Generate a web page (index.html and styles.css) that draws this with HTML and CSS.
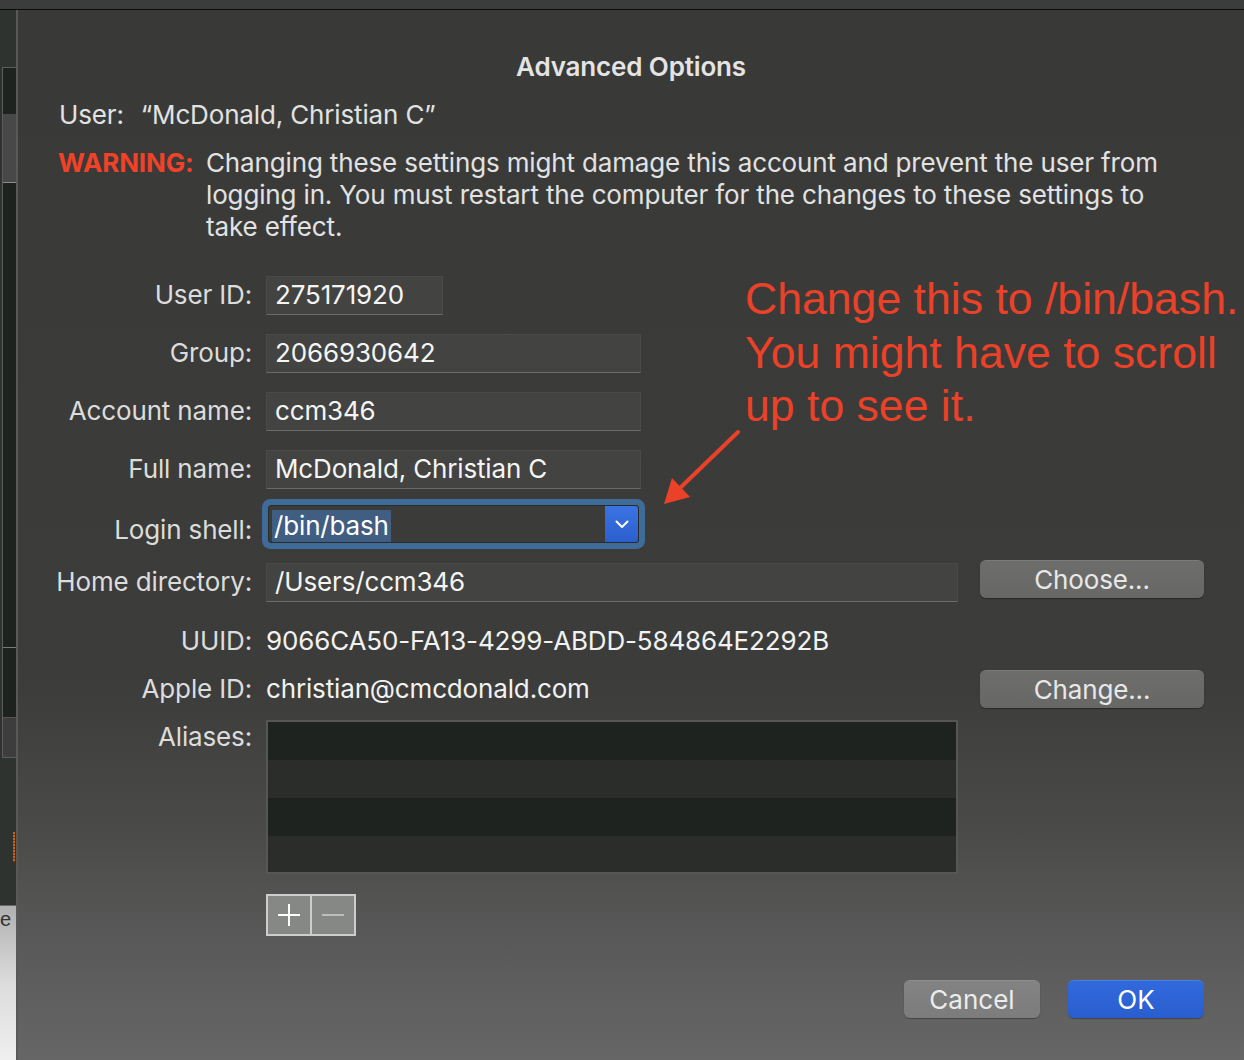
FILE: index.html
```html
<!DOCTYPE html>
<html lang="en">
<head>
<meta charset="utf-8">
<title>Advanced Options</title>
<link rel="stylesheet" href="styles.css">
</head>
<body>
<div class="topbar"></div>
<div class="main">
  <aside class="bgapp">
    <div class="bgbox">
      <div class="bb-a"></div>
      <div class="bb-b"></div>
      <div class="bb-c"></div>
      <div class="bb-d"></div>
      <div class="bb-e"></div>
    </div>
    <div class="orange"></div>
    <div class="bglight"><span class="bg-e">e</span></div>
  </aside>
  <section class="dialog">
    <h1 class="title">Advanced Options</h1>
    <div class="userline"><span class="ul-label">User:</span><span>“McDonald, Christian C”</span></div>
    <div class="warning">
      <span class="warn-label">WARNING:</span>
      <p class="warn-text">Changing these settings might damage this account and prevent the user from<br>logging in. You must restart the computer for the changes to these settings to<br>take effect.</p>
    </div>

    <div class="form">
      <div class="row r58">
        <label class="label">User ID:</label>
        <div class="fieldcol"><div class="field w-short">275171920</div></div>
      </div>
      <div class="row r58">
        <label class="label">Group:</label>
        <div class="fieldcol"><div class="field w-mid">2066930642</div></div>
      </div>
      <div class="row r58">
        <label class="label">Account name:</label>
        <div class="fieldcol"><div class="field w-mid">ccm346</div></div>
      </div>
      <div class="row r58">
        <label class="label">Full name:</label>
        <div class="fieldcol"><div class="field w-mid">McDonald, Christian C</div></div>
      </div>
      <div class="row r52">
        <label class="label label-low">Login shell:</label>
        <div class="fieldcol">
          <div class="combo">
            <div class="combo-text"><span class="sel">/bin/bash</span></div>
            <div class="combo-btn">
              <svg width="14" height="9" viewBox="0 0 14 9"><path d="M1.5 1.5 L7 7 L12.5 1.5" fill="none" stroke="#ffffff" stroke-width="2" stroke-linecap="round" stroke-linejoin="round"/></svg>
            </div>
          </div>
        </div>
      </div>
      <div class="row r64">
        <label class="label">Home directory:</label>
        <div class="fieldcol"><div class="field w-full">/Users/ccm346</div></div>
        <div class="btncol"><button class="btn btn-up">Choose...</button></div>
      </div>
      <div class="row r54">
        <label class="label">UUID:</label>
        <div class="fieldcol value">9066CA50-FA13-4299-ABDD-584864E2292B</div>
      </div>
      <div class="row r42">
        <label class="label">Apple ID:</label>
        <div class="fieldcol value">christian@cmcdonald.com</div>
        <div class="btncol"><button class="btn">Change...</button></div>
      </div>
      <div class="row aliases-row">
        <label class="label">Aliases:</label>
        <div class="fieldcol">
          <div class="aliases-table">
            <div class="at-row dark"></div>
            <div class="at-row light"></div>
            <div class="at-row dark"></div>
            <div class="at-row light last"></div>
          </div>
        </div>
      </div>
      <div class="pm-row">
        <div class="pm">
          <div class="pm-btn">
            <svg width="22" height="22" viewBox="0 0 22 22"><path d="M11 0 V22 M0 11 H22" stroke="#ffffff" stroke-width="2"/></svg>
          </div>
          <div class="pm-btn">
            <svg width="22" height="22" viewBox="0 0 22 22"><path d="M0 11 H22" stroke="#bdbdbd" stroke-width="2"/></svg>
          </div>
        </div>
      </div>
    </div>

    <div class="footer">
      <button class="fbtn cancel">Cancel</button>
      <button class="fbtn ok">OK</button>
    </div>

    <div class="annotation">Change this to /bin/bash.<br>You might have to scroll<br>up to see it.</div>
    <svg class="arrow" width="84" height="90" viewBox="0 0 84 90">
      <path d="M78 4 L18 62" stroke="#ea4128" stroke-width="4" stroke-linecap="round"/>
      <polygon points="4,76 12,50 30,69" fill="#ea4128"/>
    </svg>
  </section>
</div>
</body>
</html>
```
FILE: styles.css
```css
* { box-sizing: border-box; margin: 0; padding: 0; }

html, body {
  width: 1244px;
  height: 1060px;
  overflow: hidden;
}

body {
  background: #2e322f;
  font-family: Inter, "Noto Sans", sans-serif;
  display: flex;
  flex-direction: column;
}

.topbar {
  height: 10px;
  flex-shrink: 0;
  background: #3a3d3b;
  border-bottom: 1px solid #0c0c0c;
}

.main {
  flex: 1;
  display: flex;
  min-height: 0;
}

/* background application strip on the left */
.bgapp {
  width: 16px;
  flex-shrink: 0;
  display: flex;
  flex-direction: column;
  background: #2f332f;
}

.bgbox {
  margin-top: 57px;
  margin-left: 2px;
  height: 691px;
  border: 1px solid #5c5c5c;
  border-right: none;
  display: flex;
  flex-direction: column;
}

.bb-a { height: 46px; background: #1f2320; }
.bb-b { height: 69px; background: #474847; border-bottom: 1px solid #8c8c8c; }
.bb-c { flex: 1; background: #1e221f; border-bottom: 1px solid #7a7a7a; }
.bb-d { height: 70px; background: #1e221f; border-bottom: 1px solid #555555; }
.bb-e { height: 39px; background: #3c3d3c; }

.orange {
  margin-top: 74px;
  margin-left: 13px;
  width: 2px;
  height: 30px;
  background: repeating-linear-gradient(180deg, #c8641a 0 2px, #7a3a10 2px 3px);
}

.bglight {
  margin-top: auto;
  height: 155px;
  border-top: 1px solid #666666;
  background: linear-gradient(180deg, #b0b0b0 0%, #dcdcdc 50%, #efefef 100%);
  overflow: hidden;
}

.bg-e {
  display: block;
  margin-left: 0;
  font-family: "Liberation Sans", Arial, sans-serif;
  font-size: 20px;
  line-height: 26px;
  color: #333333;
}

/* dialog */
.dialog {
  flex: 1;
  position: relative;
  border-left: 2px solid #595959;
  background: linear-gradient(180deg, #393a38 0%, #3c3d3b 64%, #4a4b49 78%, #5d5d5d 92%, #666666 100%);
  padding: 41px 40px 0 30px;
  color: #dedede;
  font-size: 26px;
  line-height: 32px;
  letter-spacing: -0.15px;
}

.title {
  margin: 0 -40px 0 -30px;
  text-align: center;
  font-size: 26px;
  line-height: 32px;
  font-weight: 600;
  color: #e4e4e4;
}

.userline {
  margin-top: 16px;
  padding-left: 11px;
  display: flex;
  color: #e2e2e2;
}

.ul-label { margin-right: 17px; }

.warning {
  margin-top: 16px;
  padding-left: 10px;
  display: flex;
}

.warn-label {
  width: 148px;
  flex-shrink: 0;
  color: #ef4229;
  font-weight: 700;
}

.warn-text {
  color: #e2e2e2;
  white-space: nowrap;
}

.form { margin-top: 23px; }

.row {
  display: flex;
  align-items: center;
}

.r58 { height: 58px; }
.r52 { height: 52px; }
.r64 { height: 64px; }
.r54 { height: 54px; }
.r42 { height: 42px; }

.label {
  width: 204px;
  flex-shrink: 0;
  margin-right: 14px;
  text-align: right;
  color: #dcdcdc;
  white-space: nowrap;
}

.label-low { margin-top: 12px; }

.fieldcol {
  width: 692px;
  flex-shrink: 0;
}

.value {
  color: #f2f2f2;
  white-space: nowrap;
}

.btncol {
  width: 224px;
  flex-shrink: 0;
  margin-left: 22px;
}

.field {
  height: 39px;
  padding-left: 8px;
  display: flex;
  align-items: center;
  background: #434441;
  border: 1px solid #4a4b48;
  border-bottom-color: #6b6b69;
  color: #f5f5f5;
  white-space: nowrap;
}

.w-short { width: 177px; }
.w-mid { width: 375px; }
.w-full { width: 692px; }

.combo {
  margin-left: 2px;
  width: 371px;
  height: 38px;
  display: flex;
  border-radius: 3px;
  box-shadow: 0 0 0 6px #3e6b97;
  background: #3b3c39;
  border: 1px solid #2b2c2a;
}

.combo-text {
  flex: 1;
  padding-left: 3px;
  padding-top: 3px;
  display: flex;
  align-items: center;
}

.sel {
  background: #3f5e81;
  color: #ffffff;
  padding: 0 2px;
  line-height: 32px;
}

.combo-btn {
  width: 33px;
  background: linear-gradient(180deg, #3a74e2 0%, #2c5fcd 100%);
  border-radius: 0 3px 3px 0;
  display: flex;
  align-items: center;
  justify-content: center;
}

.btn {
  width: 224px;
  height: 38px;
  border: none;
  border-top: 1px solid #7a7b79;
  border-radius: 6px;
  background: linear-gradient(180deg, #6d6e6c 0%, #676866 100%);
  box-shadow: 0 1px 1px rgba(0, 0, 0, 0.35);
  color: #e8e8e8;
  font-family: Inter, "Noto Sans", sans-serif;
  font-size: 26px;
  line-height: 34px;
  letter-spacing: -0.15px;
}

.btn-up { margin-bottom: 6px; }

.aliases-row {
  margin-top: 10px;
  align-items: flex-start;
}

.aliases-row .label { padding-top: 1px; }

.aliases-table {
  width: 692px;
  height: 154px;
  border: 2px solid #565656;
  display: flex;
  flex-direction: column;
}

.at-row { height: 38px; }
.at-row.last { flex: 1; }
.dark { background: #1f231f; }
.light { background: #2b2d2a; }

.pm-row {
  margin-top: 20px;
  padding-left: 218px;
}

.pm {
  width: 90px;
  height: 42px;
  display: flex;
  gap: 2px;
  border: 2px solid #cdcdcd;
  background: #cdcdcd;
}

.pm-btn {
  flex: 1;
  background: #868886;
  display: flex;
  align-items: center;
  justify-content: center;
}

.footer {
  margin-top: 44px;
  display: flex;
  justify-content: flex-end;
  gap: 28px;
}

.fbtn {
  width: 136px;
  height: 38px;
  border: none;
  border-radius: 6px;
  font-family: Inter, "Noto Sans", sans-serif;
  font-size: 26px;
  line-height: 34px;
  box-shadow: 0 1px 1px rgba(0, 0, 0, 0.3);
}

.cancel {
  background: linear-gradient(180deg, #838383 0%, #7c7c7c 100%);
  border-top: 1px solid #8f8f8f;
  color: #ececec;
}

.ok {
  background: linear-gradient(180deg, #3169dc 0%, #2a5ecf 100%);
  border-top: 1px solid #4a7fe6;
  color: #ffffff;
}

/* annotation overlay */
.annotation {
  position: absolute;
  left: 727px;
  top: 262px;
  font-family: "Liberation Sans", Arial, sans-serif;
  font-size: 44.6px;
  line-height: 53.5px;
  letter-spacing: 0;
  color: #ea4128;
  white-space: nowrap;
}

.arrow {
  position: absolute;
  left: 642px;
  top: 418px;
}
```
